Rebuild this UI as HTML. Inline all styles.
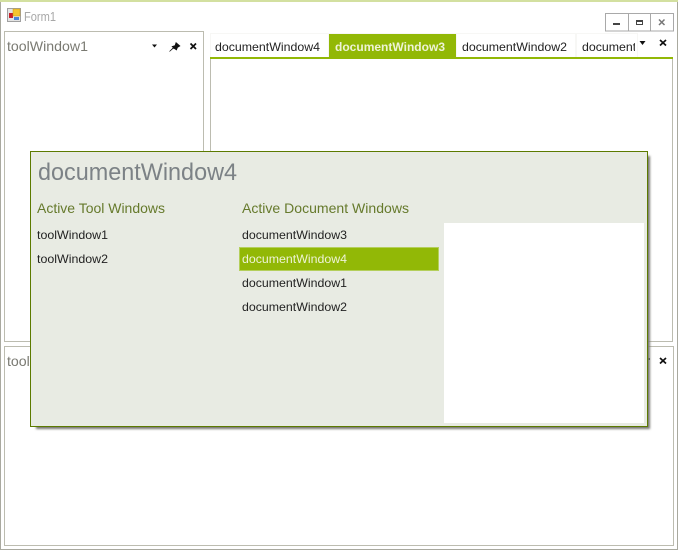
<!DOCTYPE html>
<html><head><meta charset="utf-8">
<style>
html,body{margin:0;padding:0;width:678px;height:550px;overflow:hidden;background:#fff}
svg{display:block;font-family:"Liberation Sans",sans-serif}
</style></head>
<body>
<svg width="678" height="550" viewBox="0 0 678 550" xmlns="http://www.w3.org/2000/svg">
<defs><filter id="s" x="-5%" y="-5%" width="110%" height="110%"><feGaussianBlur stdDeviation="1"/></filter></defs>
<rect width="678" height="550" fill="#fff"/>
<!-- outer border -->
<rect x="0" y="0" width="678" height="2" fill="#d3e0a0"/>
<rect x="0" y="2" width="1" height="548" fill="#a9a99f"/>
<rect x="677" y="2" width="1" height="548" fill="#a9a99f"/>
<rect x="0" y="549" width="678" height="1" fill="#a9a99f"/>
<!-- form icon -->
<rect x="7.500" y="8.500" width="13" height="13" fill="#e4e4e4" stroke="#a0a0a0"/>
<rect x="9" y="13" width="4" height="5" fill="#c8202a"/>
<rect x="13" y="9" width="7" height="7" fill="#f5c530" stroke="#c89a10" stroke-width=".5"/>
<rect x="14" y="17" width="5" height="3" fill="#4a84d8"/>
<text x="24" y="21" font-size="12.500" fill="#a8a8a8" textLength="32" lengthAdjust="spacingAndGlyphs">Form1</text>
<!-- window buttons -->
<rect x="605.500" y="13.500" width="68" height="17.500" fill="#fff" stroke="#a9a9a9"/>
<path d="M628.500 14v17M650.500 14v17" stroke="#a9a9a9"/>
<rect x="613" y="23" width="7" height="2" fill="#444"/>
<rect x="636.500" y="20.500" width="6" height="4" fill="none" stroke="#444"/>
<rect x="636" y="20" width="7" height="2" fill="#444"/>
<path d="M659 19.500l5.500 5.500M664.500 19.500l-5.500 5.500" stroke="#777" stroke-width="1.500" fill="none"/>
<!-- tool window 1 -->
<rect x="4.500" y="31.500" width="199" height="310" fill="#fff" stroke="#bcbcb0"/>
<text x="7" y="51" font-size="14" fill="#7a7a72" textLength="81" lengthAdjust="spacingAndGlyphs">toolWindow1</text>
<path d="M152 44.500h5l-2.500 3z" fill="#111"/>
<path d="M169.500 51.500L173.500 48L172 46.500L175 45.500L176 42.500L180 46L177.500 47.500L176.500 50L175 49L173 48z" fill="#111" stroke="#111" stroke-width=".6"/>
<path d="M190.500 43.500l5.500 5.500M196 43.500l-5.500 5.500" stroke="#111" stroke-width="1.700" fill="none"/>
<!-- document panel -->
<rect x="210.500" y="57.500" width="462" height="284" fill="#fff" stroke="#bcbcb0"/>
<rect x="210" y="33" width="428" height="24" fill="#f7f7f5"/>
<rect x="211" y="34" width="117" height="23" fill="#fff"/>
<rect x="329" y="34" width="127" height="23" fill="#92b806"/>
<rect x="457" y="34" width="118" height="23" fill="#fff"/>
<rect x="577" y="34" width="60" height="23" fill="#fff"/>
<rect x="210" y="57" width="463" height="2" fill="#92b806"/>
<text x="215" y="51" font-size="12" fill="#222" textLength="105" lengthAdjust="spacingAndGlyphs">documentWindow4</text>
<text x="335" y="51" font-size="12" font-weight="bold" fill="#eef3d6" textLength="110" lengthAdjust="spacingAndGlyphs">documentWindow3</text>
<text x="462" y="51" font-size="12" fill="#222" textLength="105" lengthAdjust="spacingAndGlyphs">documentWindow2</text>
<svg x="577" y="33" width="58" height="24"><text x="5" y="18" font-size="12" fill="#222" textLength="105" lengthAdjust="spacingAndGlyphs">documentWindow1</text></svg>
<path d="M639.500 41h6l-3 4z" fill="#111"/>
<path d="M660 40l6 5.500M666 40l-6 5.500" stroke="#111" stroke-width="1.700" fill="none"/>
<!-- lower tool window -->
<rect x="4.500" y="346.500" width="669" height="199" fill="#fff" stroke="#bcbcb0"/>
<text x="7" y="366" font-size="14" fill="#7a7a72" textLength="81" lengthAdjust="spacingAndGlyphs">toolWindow2</text>
<path d="M660 358l6 5.500M666 358l-6 5.500" stroke="#111" stroke-width="1.700" fill="none"/>
<rect x="648" y="358" width="2" height="2" fill="#333"/>
<!-- popup shadow -->
<rect x="36" y="156" width="614" height="273" fill="#777770" filter="url(#s)"/>
<!-- popup -->
<rect x="30.500" y="151.500" width="617" height="275" fill="#e8ebe3" stroke="#5c7a00"/>
<rect x="444" y="223" width="200" height="200" fill="#fff"/>
<text x="38" y="180" font-size="24" fill="#7c8286" textLength="199" lengthAdjust="spacingAndGlyphs">documentWindow4</text>
<text x="37" y="213" font-size="14" fill="#667a2c" textLength="128" lengthAdjust="spacingAndGlyphs">Active Tool Windows</text>
<text x="242" y="213" font-size="14" fill="#667a2c" textLength="167" lengthAdjust="spacingAndGlyphs">Active Document Windows</text>
<text x="37" y="239" font-size="12" fill="#222" textLength="71" lengthAdjust="spacingAndGlyphs">toolWindow1</text>
<text x="37" y="263" font-size="12" fill="#222" textLength="71" lengthAdjust="spacingAndGlyphs">toolWindow2</text>
<rect x="239.500" y="247.500" width="199" height="23" fill="#92b806" stroke="#b4cf5c"/>
<text x="242" y="239" font-size="12" fill="#222" textLength="105" lengthAdjust="spacingAndGlyphs">documentWindow3</text>
<text x="242" y="263" font-size="12" fill="#eef3d6" textLength="105" lengthAdjust="spacingAndGlyphs">documentWindow4</text>
<text x="242" y="287" font-size="12" fill="#222" textLength="105" lengthAdjust="spacingAndGlyphs">documentWindow1</text>
<text x="242" y="311" font-size="12" fill="#222" textLength="105" lengthAdjust="spacingAndGlyphs">documentWindow2</text>
</svg>
</body></html>
